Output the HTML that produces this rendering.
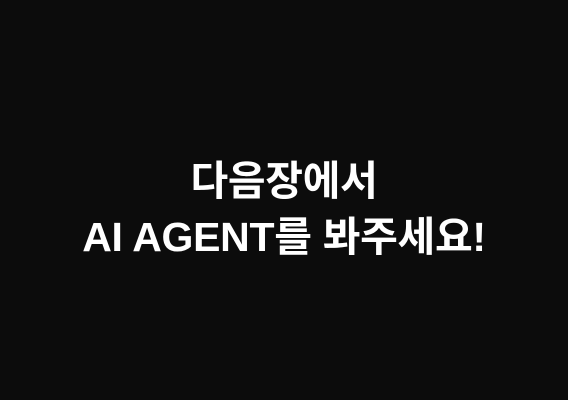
<!DOCTYPE html>
<html><head><meta charset="utf-8"><style>
html,body{margin:0;padding:0;width:568px;height:400px;background:#0c0c0c;overflow:hidden}
.t{position:absolute;left:0;width:568px;top:153px;text-align:center;color:#fff;font-family:"Liberation Sans","Noto Sans CJK KR",sans-serif;font-weight:700;font-size:41px;line-height:56px;letter-spacing:-0.3px}
</style></head><body>
<div class="t">다음장에서<br>AI AGENT를 봐주세요!</div>
</body></html>
